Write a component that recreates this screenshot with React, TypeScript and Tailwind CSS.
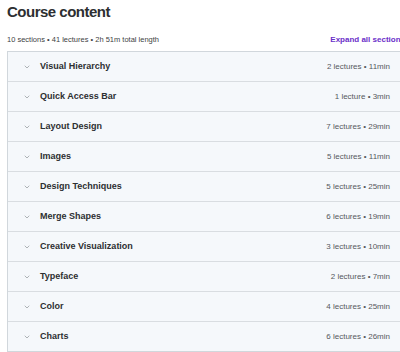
import { ChevronDown } from "lucide-react";

type Section = { title: string; meta: string };

const sections: Section[] = [
  { title: "Visual Hierarchy", meta: "2 lectures • 11min" },
  { title: "Quick Access Bar", meta: "1 lecture • 3min" },
  { title: "Layout Design", meta: "7 lectures • 29min" },
  { title: "Images", meta: "5 lectures • 11min" },
  { title: "Design Techniques", meta: "5 lectures • 25min" },
  { title: "Merge Shapes", meta: "6 lectures • 19min" },
  { title: "Creative Visualization", meta: "3 lectures • 10min" },
  { title: "Typeface", meta: "2 lectures • 7min" },
  { title: "Color", meta: "4 lectures • 25min" },
  { title: "Charts", meta: "6 lectures • 26min" },
];

export default function App() {
  return (
    <div
      className="w-[400px] h-[352px] overflow-hidden bg-white text-[#2d2f31]"
      style={{ fontFamily: '"Liberation Sans", Arial, sans-serif' }}
    >
      <div className="pl-[7px]">
        <h2 className="pt-[2px] text-[15px] leading-[20px] font-bold tracking-[-0.5px]">
          Course content
        </h2>
        <div className="mt-[13px] flex items-center justify-between whitespace-nowrap">
          <span className="text-[7.5px] leading-[10px] text-[#3e4143]">
            10 sections • 41 lectures • 2h 51m total length
          </span>
          <span className="text-[8px] leading-[10px] font-bold text-[#6b2fc9] -mr-[5px]">
            Expand all sections
          </span>
        </div>
        <div className="mt-[6px] border border-r-0 border-[#d1d7dc] bg-[#f5f8fb]">
          {sections.map((s, i) => (
            <div
              key={s.title}
              className={
                "flex items-center pl-[15px] pr-[10px] " +
                (i > 0 ? "h-[30px] border-t border-[#d9dde1]" : "h-[29px]")
              }
            >
              <ChevronDown size={8} strokeWidth={2} className="text-[#8a8f93]" />
              <span className="ml-[9px] text-[9px] font-bold text-[#2d2f31]">{s.title}</span>
              <span className="ml-auto text-[8px] text-[#55595d]">{s.meta}</span>
            </div>
          ))}
        </div>
      </div>
    </div>
  );
}
